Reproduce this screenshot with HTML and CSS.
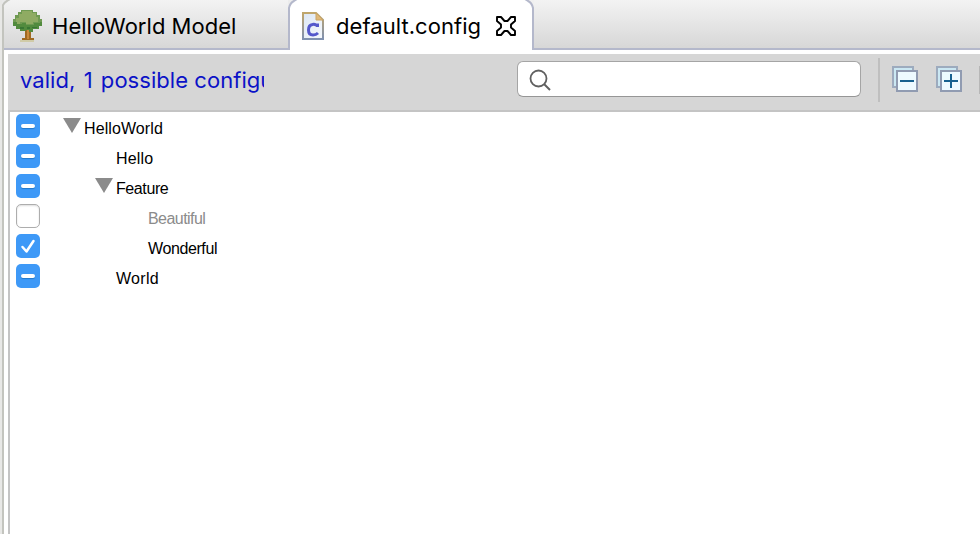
FILE: index.html
```html
<!DOCTYPE html>
<html lang="en">
<head>
<meta charset="utf-8">
<title>default.config</title>
<link rel="stylesheet" href="styles.css">
</head>
<body>
<div class="window">
  <header class="tabs">
    <div class="tab model">
      <svg class="corner" width="10" height="10" viewBox="0 0 10 10"><path d="M0 0H9L6 1L3 4L1 7L0 10Z" fill="#e9e9e9"/><path d="M0 10V8Q1 3 5 1L8-1" fill="none" stroke="#c3c4be" stroke-width="2"/></svg>
      <svg class="tree-icon" width="32" height="32" viewBox="0 0 32 32">
        <path d="M13 18H19V28H22V30H10V28H13Z" fill="#a06a22"/><path d="M15 20H17V29H15Z" fill="#c98a3a"/><path d="M8 30H22V32H8Z" fill="#d0cba8"/>
        <path d="M9 0H21V2H25V5H28V9H30V16H27V19H21V22H17V20H14V21H8V19H4V16H1V9H3V5H6V2H9Z" fill="#6f9a52"/>
        <path d="M10 1H20V3H24V7H26V12H21V14H14V12H8V14H4V8H7V4H10Z" fill="#8fab63"/>
        <path d="M1 12H5V14H10V13H14V15H22V13H28V12H30V16H27V19H21V22H17V20H14V21H8V19H4V16H1Z" fill="#528b3e"/>
        <path d="M8 17H12V19H8ZM20 17H25V18H20ZM15 17H18V19H15Z" fill="#397734"/>
      </svg>
      <span class="model-name">HelloWorld Model</span>
    </div>
    <div class="tab active">
      <svg class="corner" width="10" height="10" viewBox="0 0 10 10"><path d="M0 0H8L5 2L2 5L0 9Z" fill="#ececec"/><path d="M1 10V8Q2 3 6 1L9-1" fill="none" stroke="#b4b8cb" stroke-width="2"/></svg>
      <svg class="file-icon" width="22" height="28" viewBox="0 0 22 28">
        <defs><linearGradient id="page" x2="1" y2="1"><stop stop-color="#dce7f4"/><stop offset="1" stop-color="#f5f8fc"/></linearGradient><linearGradient id="edge" x2="0" y2="1"><stop stop-color="#c0a66b"/><stop offset="1" stop-color="#7f91b0"/></linearGradient></defs>
        <path d="M1 1H14L21 8V27H1Z" fill="url(#page)" stroke="url(#edge)" stroke-width="2"/><path d="M14 1V8H21Z" fill="#e0b878" stroke="#c9a465"/>
        <path d="M15.500 15V13H14Q12.500 12 10.500 12.500Q6.500 13 6.500 18Q6.500 23 11 23Q14 23 16 21" fill="none" stroke="#5458cb" stroke-width="3"/>
      </svg>
      <span class="file-name">default.config</span>
      <svg class="close" width="22" height="22" viewBox="0 0 22 22"><path d="M2 2H6L9.500 6H12.500L16 2H20V6L16 9.500V12.500L20 16V20H16L12.500 16H9.500L6 20H2V16L6 12.500V9.500L2 6Z" fill="#fff" stroke="#000" stroke-width="1.900" stroke-linejoin="round"/></svg>
      <svg class="corner right" width="10" height="10" viewBox="0 0 10 10"><path d="M10 0H2L5 2L8 5L10 9Z" fill="#f0f0f0"/><path d="M9 10V8Q8 3 4 1L1-1" fill="none" stroke="#b4b8cb" stroke-width="2"/></svg>
    </div>
    <div class="tab-fill"></div>
  </header>
  <main class="editor">
    <div class="toolbar">
      <div class="status">valid, <span class="count">1</span> possible configurations</div>
      <div class="search"><svg width="24" height="24" viewBox="0 0 24 24"><circle cx="9.500" cy="9.500" r="8" fill="none" stroke="#606060" stroke-width="1.800"/><path d="M15 15L21 21" stroke="#606060" stroke-width="2"/></svg></div>
      <div class="separator"></div>
      <svg class="collapse" width="26" height="26" viewBox="0 0 26 26"><path d="M1 1H21V21H1Z" fill="#cbe8f3" stroke="#9dabbe" stroke-width="2"/><path d="M5 5H25V25H5Z" fill="#edfaff" stroke="#909bb1" stroke-width="2"/><path d="M8 15H22" stroke="#17618f" stroke-width="2"/></svg>
      <svg class="expand" width="26" height="26" viewBox="0 0 26 26"><path d="M1 1H21V21H1Z" fill="#cbe8f3" stroke="#9dabbe" stroke-width="2"/><path d="M5 5H25V25H5Z" fill="#edfaff" stroke="#909bb1" stroke-width="2"/><path d="M8 15H22M15 8V22" stroke="#17618f" stroke-width="2"/></svg>
      <div class="end-mark"></div>
    </div>
    <div class="tree">
      <div class="row"><span class="check minus"></span><span class="arrow"></span><span class="label root">HelloWorld</span></div>
      <div class="row"><span class="check minus"></span><span class="label level1 hello">Hello</span></div>
      <div class="row"><span class="check minus"></span><span class="arrow nested"></span><span class="label feature">Feature</span></div>
      <div class="row"><span class="check empty"></span><span class="label level2 muted">Beautiful</span></div>
      <div class="row"><span class="check"><svg width="24" height="24" viewBox="0 0 24 24"><path d="M6.500 13L10.500 17.500L17.500 7" fill="none" stroke="#fff" stroke-width="2.500" stroke-linecap="round" stroke-linejoin="round"/></svg></span><span class="label level2 wonderful">Wonderful</span></div>
      <div class="row"><span class="check minus"></span><span class="label level1 world">World</span></div>
    </div>
  </main>
</div>
</body>
</html>
```
FILE: styles.css
```css
* { box-sizing: border-box; }
body { margin: 0; overflow: hidden; background: #e8e8e6; }
svg { display: block; flex: none; }
.window { width: 978px; height: 534px; margin-left: 2px; background: #fff; border-left: 2px solid #c3c4be; }
.tabs { display: flex; height: 50px; font: 22px/28px Inter, sans-serif; color: #000; }
.tab { position: relative; display: flex; flex: none; height: 50px; white-space: nowrap; }
.model { width: 284px; padding-left: 8px; background: linear-gradient(#f3f3f3, #d7d7d7); border-bottom: 2px solid #b4b8cb; }
.corner { position: absolute; left: -2px; top: 0; }
.tree-icon { margin-top: 10px; }
.model-name { margin: 12px 0 0 8px; letter-spacing: .03px; }
.active { width: 246px; padding-left: 12px; border: solid #b4b8cb; border-width: 0 2px; background: #fff; }
.file-icon { margin-top: 12px; }
.file-name { width: 145px; margin: 12px 0 0 12px; letter-spacing: .05px; }
.close { margin: 15px 0 0 14px; }
.right { left: auto; right: -2px; }
.tab-fill { flex: 1; background: linear-gradient(#f3f3f3, #d7d7d7); border-bottom: 2px solid #b4b8cb; }
.editor { margin: 4px 0 0 4px; height: 480px; }
.toolbar { display: flex; height: 56px; background: #d6d6d6; overflow: hidden; }
.status { flex: none; width: 244px; margin: 12px 0 0 12px; overflow: hidden; white-space: nowrap; color: #0b12c7; font: 22px/28px Inter, sans-serif; letter-spacing: .05px; height: 32px; }
.count { display: inline-block; width: 13px; text-align: center; }
.search { flex: none; width: 344px; height: 36px; margin: 7px 0 0 253px; padding: 7px 11px; background: #fff; border: 1px solid #a5a5a5; border-bottom-color: #969696; border-radius: 6px; }
.separator { flex: none; width: 2px; height: 44px; margin: 4px 0 0 17px; background: #bfbfbf; }
.collapse { margin: 12px 0 0 12px; }
.expand { margin: 12px 0 0 18px; }
.end-mark { flex: none; width: 2px; height: 28px; margin: 12px 0 0 17px; background: #b7b7b7; }
.tree { height: 424px; padding: 2px 0 0 6px; border: solid #c4c4c4; border-width: 2px 0 0 2px; background: #fff; }
.row { display: flex; height: 30px; }
.check { position: relative; flex: none; width: 24px; height: 24px; border-radius: 5px; background: #3e99f7; }
.minus::after { content: ""; display: block; width: 14px; height: 4px; margin: 10px 5px; border-radius: 2px; background: #fff; box-shadow: 0 1px 1px #2478c9; }
.empty { background: #fff; border: 1px solid #adadad; box-shadow: inset 0 1px 2px #ddd; }
.arrow { flex: none; width: 18px; height: 15px; margin: 4px 0 0 23px; background: #8b8b8b; clip-path: polygon(0 0, 100% 0, 50% 100%); }
.nested { margin-left: 55px; }
.label { margin-top: 6px; font: 16px/18px "Liberation Sans", sans-serif; color: #000; white-space: nowrap; }
.root, .feature { margin-left: 3px; }
.root { letter-spacing: .1px; }
.feature { letter-spacing: -.4px; }
.level1 { margin-left: 76px; }
.hello { letter-spacing: .2px; }
.level2 { margin-left: 108px; }
.muted { color: #8b8b8b; letter-spacing: -.55px; }
.wonderful { letter-spacing: -.4px; }
.world { letter-spacing: .3px; }
```
